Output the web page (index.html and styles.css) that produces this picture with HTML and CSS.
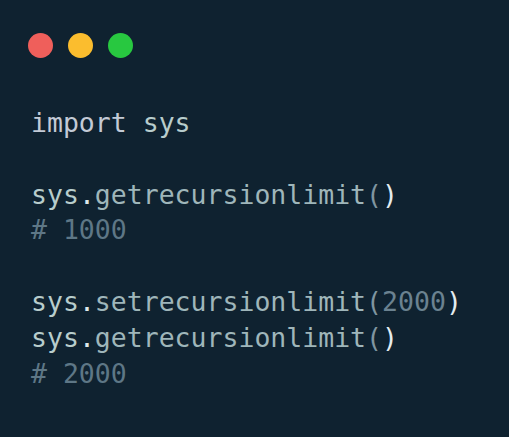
FILE: index.html
```html
<!DOCTYPE html>
<html>
<head>
<meta charset="utf-8">
<link rel="stylesheet" href="styles.css">
</head>
<body>
<div class="window">
  <div class="dots">
    <span class="dot red"></span>
    <span class="dot yellow"></span>
    <span class="dot green"></span>
  </div>
<pre class="code"><span class="kw">import</span> <span class="mod">sys</span>

<span class="mod">sys</span><span class="dot-op">.</span><span class="fn">getrecursionlimit</span><span class="paren">(</span><span class="close">)</span>
<span class="cm"># 1000</span>

<span class="mod">sys</span><span class="dot-op">.</span><span class="fn">setrecursionlimit</span><span class="paren">(</span><span class="num">2000</span><span class="close">)</span>
<span class="mod">sys</span><span class="dot-op">.</span><span class="fn">getrecursionlimit</span><span class="paren">(</span><span class="close">)</span>
<span class="cm"># 2000</span></pre>
</div>
</body>
</html>
```
FILE: styles.css
```css
html, body {
  margin: 0;
  padding: 0;
  background: #0f222f;
}
.window {
  width: 509px;
  height: 437px;
  box-sizing: border-box;
  background: #0f2230;
  padding: 33px 0 0 28px;
  border-radius: 0 0 8px 0;
}
.dots {
  display: flex;
  gap: 15px;
  height: 25px;
}
.dot {
  width: 25px;
  height: 25px;
  border-radius: 50%;
  display: block;
}
.red { background: #ef5f5b; }
.yellow { background: #fbbd2e; }
.green { background: #28c840; }
.code {
  margin: 47px 0 0 3px;
  font-family: "DejaVu Sans Mono", monospace;
  font-size: 26.5px;
  line-height: 35.8px;
  color: #bccbd0;
  white-space: pre;
}
.kw { color: #c3cad6; }
.mod { color: #b8cdcc; }
.dot-op { color: #dfe8ea; }
.fn { color: #9fb6ba; }
.paren { color: #7f95a0; }
.close { color: #e4ecef; }
.num { color: #6b8290; }
.cm { color: #5e7786; }
```
